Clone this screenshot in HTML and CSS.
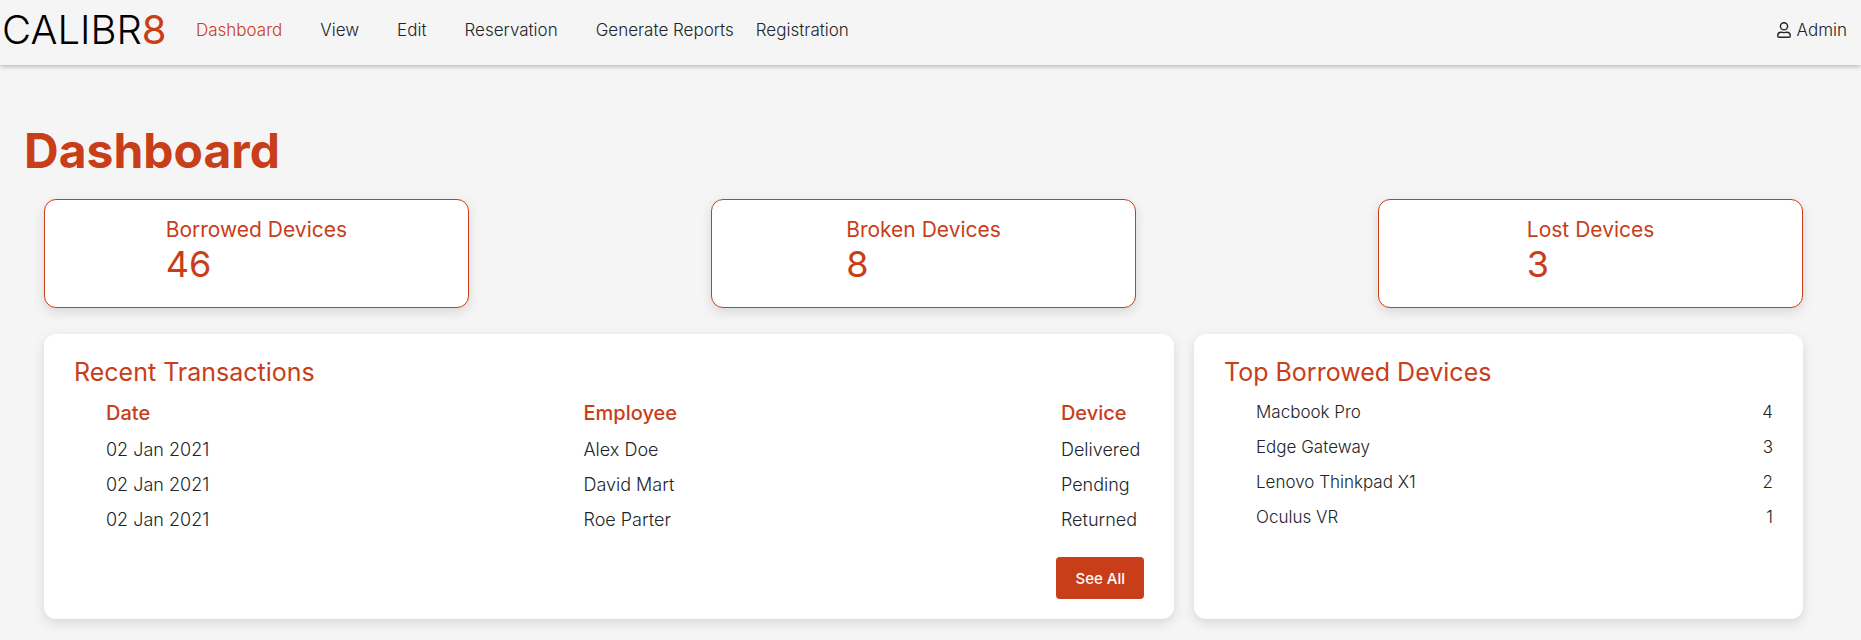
FILE: index.html
```html
<!DOCTYPE html>
<html lang="en">
<head>
  <meta charset="utf-8">
  <meta name="viewport" content="width=device-width, initial-scale=1">
  <title>Calibr8 Dashboard</title>
  <link rel="stylesheet" href="styles.css">
</head>
<body>
  <header class="topbar">
    <a class="logo" href="#">CALIBR<span class="logo-accent">8</span></a>
    <nav class="nav">
      <a class="nav-link active" href="#">Dashboard</a>
      <a class="nav-link" href="#">View</a>
      <a class="nav-link" href="#">Edit</a>
      <a class="nav-link" href="#">Reservation</a>
      <a class="nav-link" href="#">Generate Reports</a>
      <a class="nav-link compact" href="#">Registration</a>
    </nav>
    <a class="account" href="#">
      <svg class="account-icon" viewBox="0 0 14 16" aria-hidden="true">
        <circle cx="7" cy="4.3" r="3.6"/>
        <path d="M4.2 10.2c1 0 1.600.4 2.800.4s1.800-.4 2.800-.4a3.400 3.400 0 0 1 3.400 3.400v.5a1.200 1.200 0 0 1-1.200 1.200H2a1.200 1.200 0 0 1-1.200-1.200v-.5a3.400 3.400 0 0 1 3.400-3.400z"/>
      </svg>
      Admin
    </a>
  </header>

  <main class="page">
    <h1 class="page-title">Dashboard</h1>

    <div class="content">
      <section class="stats">
        <article class="stat">
          <div>
            <h2 class="stat-label">Borrowed Devices</h2>
            <p class="stat-value">46</p>
          </div>
        </article>
        <article class="stat">
          <div>
            <h2 class="stat-label">Broken Devices</h2>
            <p class="stat-value">8</p>
          </div>
        </article>
        <article class="stat">
          <div>
            <h2 class="stat-label">Lost Devices</h2>
            <p class="stat-value">3</p>
          </div>
        </article>
      </section>

      <div class="panels">
        <section class="panel">
          <h2 class="panel-title">Recent Transactions</h2>
          <div class="panel-body">
            <table class="transactions">
              <thead>
                <tr><th>Date</th><th>Employee</th><th>Device</th></tr>
              </thead>
              <tbody>
                <tr><td>02 Jan 2021</td><td>Alex Doe</td><td>Delivered</td></tr>
                <tr><td>02 Jan 2021</td><td>David Mart</td><td>Pending</td></tr>
                <tr><td>02 Jan 2021</td><td>Roe Parter</td><td>Returned</td></tr>
              </tbody>
            </table>
            <button class="see-all" type="button">See All</button>
          </div>
        </section>

        <section class="panel">
          <h2 class="panel-title">Top Borrowed Devices</h2>
          <div class="panel-body">
            <table class="ranking">
              <tbody>
                <tr><td>Macbook Pro</td><td>4</td></tr>
                <tr><td>Edge Gateway</td><td>3</td></tr>
                <tr><td>Lenovo Thinkpad X1</td><td>2</td></tr>
                <tr><td>Oculus VR</td><td>1</td></tr>
              </tbody>
            </table>
          </div>
        </section>
      </div>
    </div>
  </main>
</body>
</html>
```
FILE: styles.css
```css
:root {
  --accent: #c73e19;
  --text: #212529;
  --page: #f5f5f5;
  --shadow: 0 4px 12px rgba(0, 0, 0, 0.12);
}

* {
  box-sizing: border-box;
}

body {
  margin: 0;
  background: var(--page);
  color: var(--text);
  font-family: Inter, "Open Sans", sans-serif;
  font-size: 17px;
  font-weight: 300;
}

h1, h2, p {
  margin: 0;
}

a {
  color: inherit;
  text-decoration: none;
}

.topbar {
  display: flex;
  align-items: center;
  height: 65px;
  padding: 0 14px 6px 2px;
  box-shadow: 0 1px 5px rgba(0, 0, 0, 0.3);
}

.logo {
  width: 194px;
  color: #000;
  font-size: 40px;
  line-height: 40px;
}

.logo-accent {
  color: var(--accent);
  font-weight: 400;
}

.nav {
  display: flex;
  gap: 38px;
  font-size: 17px;
}

.nav-link {
  white-space: nowrap;
}

.nav-link.active {
  color: var(--accent);
}

.nav-link.compact {
  margin-left: -16px;
}

.account {
  display: flex;
  align-items: center;
  gap: 6px;
  margin-left: auto;
}

.account-icon {
  width: 14px;
  height: 16px;
  fill: none;
  stroke: currentColor;
  stroke-width: 1.4;
}

.page {
  padding: 50px 58px 21px 24px;
}

.page-title {
  color: var(--accent);
  font-size: 48px;
  font-weight: 700;
  line-height: 72px;
}

.content {
  padding: 12px 0 0 20px;
}

.stats {
  display: flex;
  justify-content: space-between;
}

.stat {
  display: flex;
  justify-content: center;
  width: 24.15%;
  padding: 15px 16px 23px;
  border: 1px solid var(--accent);
  border-radius: 12px;
  background: #fff;
  box-shadow: var(--shadow);
  color: var(--accent);
}

.stat-label {
  font-size: 21px;
  font-weight: 400;
  line-height: 30px;
}

.stat-value {
  font-size: 36px;
  font-weight: 400;
  line-height: 39px;
}

.panels {
  display: grid;
  grid-template-columns: 1130fr 609fr;
  gap: 20px;
  margin-top: 26px;
}

.panel {
  padding: 20px 30px;
  border-radius: 12px;
  background: #fff;
  box-shadow: var(--shadow);
}

.panel-title {
  color: var(--accent);
  font-size: 25px;
  font-weight: 400;
  line-height: 36px;
}

.panel-body {
  display: flex;
  flex-direction: column;
  align-items: flex-end;
  padding: 4px 0 0 32px;
}

table {
  width: 100%;
  border-collapse: collapse;
}

th, td {
  height: 35px;
  padding: 0;
  text-align: left;
  white-space: nowrap;
}

.transactions {
  font-size: 18px;
}

.transactions th {
  height: 38px;
  width: 46%;
  color: var(--accent);
  font-size: 20px;
  font-weight: 500;
}

.transactions th:last-child {
  width: 8%;
}

.ranking td:last-child {
  text-align: right;
}

.see-all {
  height: 42px;
  margin-top: 20px;
  padding: 0 19px;
  border: 0;
  border-radius: 4px;
  background: var(--accent);
  color: #fff;
  font-family: inherit;
  font-size: 15px;
  font-weight: 500;
}
```
